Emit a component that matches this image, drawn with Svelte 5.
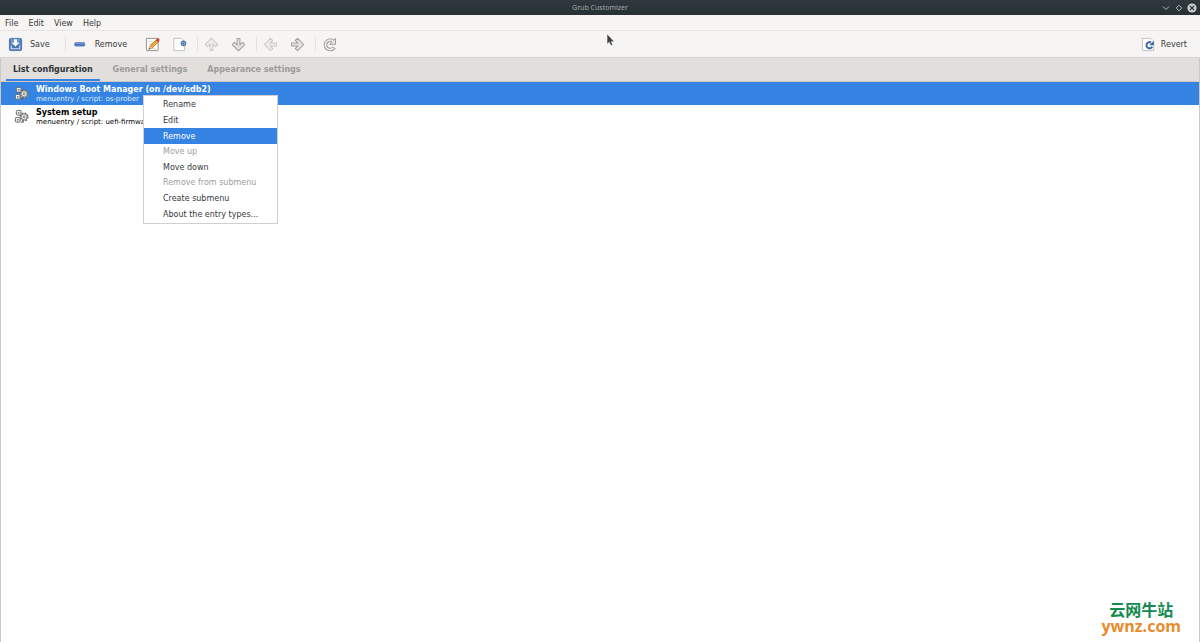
<script>
  const menus = ['File', 'Edit', 'View', 'Help'];
  const tabs = ['List configuration', 'General settings', 'Appearance settings'];
  const entries = [
    { title: 'Windows Boot Manager (on /dev/sdb2)', detail: 'menuentry / script: os-prober' },
    { title: 'System setup', detail: 'menuentry / script: uefi-firmware' }
  ];
  const actions = [
    { label: 'Rename' },
    { label: 'Edit' },
    { label: 'Remove' },
    { label: 'Move up', disabled: true },
    { label: 'Move down' },
    { label: 'Remove from submenu', disabled: true },
    { label: 'Create submenu' },
    { label: 'About the entry types...' }
  ];
  let activeTab = $state(0);
  let selected = $state(0);
  let hovered = $state(2);
</script>

{#snippet arrow(angle, faint)}
  <svg class="icon" class:faint viewBox="0 0 16 16" aria-hidden="true">
    <path transform="rotate({angle} 8 8)" d="M8 1.3 14.6 7.9 12.4 10.4 9.5 7.6V14.4H6.5V7.6L3.6 10.4 1.4 7.9Z" stroke="#a09f9d" stroke-width="1.1" stroke-linejoin="round" fill="#e4e3e1" />
  </svg>
{/snippet}

<div class="window">
  <header class="titlebar">
    <h1>Grub Customizer</h1>
    <div class="controls">
      <button aria-label="Minimize"><svg viewBox="0 0 10 10"><path d="M2 3.5 5 6.5 8 3.5" fill="none" stroke="#b3b9bb" /></svg></button>
      <button aria-label="Maximize"><svg viewBox="0 0 10 10"><path d="M5 2.2 7.8 5 5 7.8 2.2 5Z" fill="none" stroke="#b3b9bb" /></svg></button>
      <button aria-label="Close"><svg viewBox="0 0 10 10"><circle cx="5" cy="5" r="4.6" fill="#c9cdce" /><path d="M3 3 7 7M7 3 3 7" stroke="#2b3439" stroke-width="1.1" /></svg></button>
    </div>
  </header>

  <nav class="menubar">
    {#each menus as menu}<button>{menu}</button>{/each}
  </nav>

  <div class="toolbar" role="toolbar" aria-label="Main toolbar">
    <button class="save">
      <svg class="icon" viewBox="0 0 16 16" aria-hidden="true">
        <rect x="1.5" y="1.5" width="13" height="13" rx="1.5" fill="#4b78b5" stroke="#4a72aa" />
        <path d="M3 2H13V8H3Z" fill="#7198cc" />
        <path d="M6.5 2.5H9.5V6H12L8 10 4 6H6.5Z" fill="#fff" />
        <path d="M3.5 9V12.5H12.5V9" fill="none" stroke="#d5e0ef" stroke-width="1.2" />
      </svg>
      <span>Save</span>
    </button>
    <i class="sep"></i>
    <button class="remove">
      <svg class="icon" viewBox="0 0 16 16" aria-hidden="true"><rect x="3" y="6" width="10.5" height="3.6" rx=".6" fill="#4d78b6" stroke="#5f84bb" /><path d="M3.5 6.8H13" stroke="#88a8d3" stroke-width=".8" /></svg>
      <span>Remove</span>
    </button>
    <button class="tool" aria-label="Edit entry">
      <svg class="icon" viewBox="0 0 16 16" aria-hidden="true">
        <rect x="1.5" y="1.5" width="12.5" height="13" rx=".5" fill="#fff" stroke="#8b8c89" />
        <path d="M3.5 5H9M3.5 7.5H8M3.5 12.5H12" stroke="#c9cac7" stroke-width=".8" />
        <path d="M4.1 13 5.1 9.6 12.2 2.8 14.5 5.1 7.4 12Z" fill="#f2a944" stroke="#a56b24" stroke-width=".8" />
        <path d="M4.1 13 5.1 9.6 7.4 12Z" fill="#e8d1a7" />
        <path d="M4.1 13 4.7 11.5 5.6 12.4Z" fill="#443a2c" />
        <path d="M11.5 3.5 13.2 1.8Q14.2 1 15.2 2 16 3 15.2 4L13.7 5.7Z" fill="#d63c36" />
      </svg>
    </button>
    <button class="tool" aria-label="New entry">
      <svg class="icon" viewBox="0 0 16 16" aria-hidden="true">
        <path d="M2 1.5H10L13.5 5V14.5H2Z" fill="#fff" stroke="#c0c1be" />
        <circle cx="12.2" cy="6.8" r="2.3" fill="#d8e3f1" stroke="#4c73ac" stroke-width="1.3" />
        <path d="M10.4 6.8H14M12.2 5V8.6" stroke="#4c73ac" stroke-width=".9" />
      </svg>
    </button>
    <i class="sep"></i>
    <button class="tool" disabled aria-label="Move up">{@render arrow(0, true)}</button>
    <button class="tool" aria-label="Move down">{@render arrow(180, false)}</button>
    <i class="sep"></i>
    <button class="tool" disabled aria-label="Remove from submenu">{@render arrow(270, true)}</button>
    <button class="tool" aria-label="Create submenu">{@render arrow(90, false)}</button>
    <i class="sep"></i>
    <button class="tool" aria-label="Reload">
      <svg class="icon" viewBox="0 0 16 16" aria-hidden="true">
        <g fill="none">
          <path d="M13 11A5 5 0 1 1 11.6 4.3" stroke="#989795" stroke-width="3.8" />
          <path d="M14.4 1.5V7.8H8.2Z" fill="#e9e8e6" stroke="#989795" stroke-linejoin="round" />
          <path d="M12.4 11.6A5 5 0 1 1 11.9 4.6" stroke="#eeedec" stroke-width="1.9" />
        </g>
      </svg>
    </button>
    <button class="revert">
      <svg class="icon" viewBox="0 0 16 16" aria-hidden="true">
        <path d="M1.5 1.5H10.5L13.5 4.5V14.5H1.5Z" fill="#fff" stroke="#c0c1be" />
        <path d="M12 10.4A3.3 3.3 0 1 1 10.8 5.9" fill="none" stroke="#3f69a5" stroke-width="2.2" />
        <path d="M13.6 4.3V8.8H8.9Z" fill="#2f5a96" />
      </svg>
      <span>Revert</span>
    </button>
  </div>

  <div class="tabs" role="tablist">
    {#each tabs as tab, i}
      <button role="tab" aria-selected={activeTab === i} class:active={activeTab === i} onclick={() => (activeTab = i)}>{tab}</button>
    {/each}
  </div>

  <main>
    {#each entries as entry, i}
      <button class="entry" class:selected={selected === i} onclick={() => (selected = i)}>
        <svg class="gears" viewBox="0 0 16 16" aria-hidden="true">
          <g fill="#efefed" stroke="#636562">
            <circle cx="10.8" cy="8.4" r="4" stroke-width="1.6" stroke-dasharray="1.8 1.35" />
            <circle cx="10.8" cy="8.4" r="3.3" stroke-width=".8" />
            <circle cx="10.8" cy="8.4" r="1.2" stroke-width=".8" />
            <rect x="2.5" y="1.5" width="5" height="5" rx="1" />
            <rect x="4.5" y="3.5" width="1" height="1" stroke-width=".6" />
            <rect x="1.5" y="9" width="5" height="5" rx="1" />
            <rect x="3.5" y="11" width="1" height="1" stroke-width=".6" />
            <path d="M7.5 13.8H10.5" stroke-width="1.4" />
          </g>
        </svg>
        <span class="words"><strong>{entry.title}</strong><small>{entry.detail}</small></span>
      </button>
    {/each}

    <div class="context" role="menu">
      {#each actions as action, i}
        <button role="menuitem" disabled={action.disabled} class:hot={hovered === i} onmouseenter={() => (hovered = i)}>{action.label}</button>
      {/each}
    </div>
  </main>

  <svg class="pointer" viewBox="0 0 9 14" aria-hidden="true"><path d="M1 .8V11.2L3.3 9.3 4.9 12.8 6.8 11.9 5.4 8.7H8.4Z" fill="#3f4143" stroke="#fff" stroke-width=".6" /></svg>

  <div class="watermark"><span class="name">云网牛站</span><span class="site">ywnz.com</span></div>
</div>

<style>
  :global(body) { margin: 0; }
  .window {
    position: relative;
    display: flex;
    flex-direction: column;
    min-height: 100vh;
    background: #fff;
    color: #36393a;
    font: 8px/10px "DejaVu Sans", sans-serif;
    overflow: hidden;
  }
  button {
    margin: 0;
    padding: 0;
    border: 0;
    background: none;
    color: inherit;
    font: inherit;
    text-align: left;
    white-space: nowrap;
  }
  svg { display: block; }
  .titlebar {
    display: grid;
    grid-template-columns: 1fr auto 1fr;
    align-items: center;
    height: 15px;
    background: linear-gradient(#2f393e, #263035);
  }
  h1 {
    grid-column: 2;
    margin: 0;
    color: #a3a9ab;
    font: 7px/10px "Noto Sans", sans-serif;
  }
  .controls {
    display: flex;
    justify-content: flex-end;
    gap: 3px;
    padding-right: 3px;
  }
  .controls svg { width: 10px; height: 10px; }
  .menubar {
    display: flex;
    gap: 10px;
    height: 15px;
    padding: 0 5px;
    border-bottom: 1px solid #e9e7e5;
    background: #f6f5f4;
  }
  .menubar button { padding-top: 2px; }
  .toolbar {
    display: flex;
    align-items: center;
    height: 26px;
    padding: 0 13px 0 8px;
    border-bottom: 1px solid #d9d5d1;
    background: #f6f5f4;
  }
  .toolbar button { display: flex; align-items: center; gap: 7px; }
  .toolbar span { padding-top: 2px; }
  .icon { width: 15px; height: 15px; }
  .faint { opacity: 0.5; }
  .sep { width: 1px; height: 14px; margin-left: 4px; background: #e4e1de; }
  .save { margin-right: 11px; }
  .toolbar .remove { gap: 8px; margin: 0 12px 0 6px; }
  .toolbar .tool { justify-content: center; width: 27px; }
  .toolbar .revert { margin-left: auto; gap: 5px; }
  .tabs {
    display: flex;
    gap: 6px;
    height: 23px;
    padding: 0 5px;
    border: 1px solid #cdc8c3;
    border-top: 0;
    background: #e1dedb;
  }
  .tabs button {
    padding: 2px 7px 0;
    border-bottom: 2px solid transparent;
    color: #9b9c9b;
    font-weight: bold;
  }
  .tabs .active { border-color: #3584e4; color: #2e3436; }
  main {
    position: relative;
    flex: 1;
    display: flex;
    flex-direction: column;
    border: 0 solid #cdc8c3;
    border-width: 0 1px;
  }
  .entry {
    display: flex;
    align-items: center;
    gap: 7px;
    height: 23px;
    padding: 0 13px;
    color: #000;
  }
  .gears { width: 15px; height: 15px; }
  .words { display: flex; flex-direction: column; }
  strong { line-height: 11px; }
  small { font-size: 7px; line-height: 8px; }
  .selected { background: #3584e4; color: #fff; }
  .selected small { color: #dbe9fb; }
  .context {
    position: absolute;
    top: 13px;
    left: 142px;
    display: grid;
    grid-auto-rows: 1fr;
    width: 133px;
    height: 125px;
    padding: 1px 0;
    border: 1px solid #d2d0ce;
    background: #fff;
  }
  .context button { padding: 1px 19px 0; }
  .context button:disabled { color: #9c9d9d; }
  .context .hot { background: #3584e4; color: #fff; }
  .pointer {
    position: absolute;
    top: 33px;
    left: 606px;
    width: 9px;
    height: 14px;
  }
  .watermark {
    position: absolute;
    right: 19px;
    bottom: 7px;
    display: flex;
    flex-direction: column;
    align-items: center;
  }
  .name { color: #138a50; font: bold 16px/16px "Noto Sans CJK SC", sans-serif; }
  .site { color: #e98b2a; font: bold 16px/18px "Open Sans", sans-serif; }
</style>
